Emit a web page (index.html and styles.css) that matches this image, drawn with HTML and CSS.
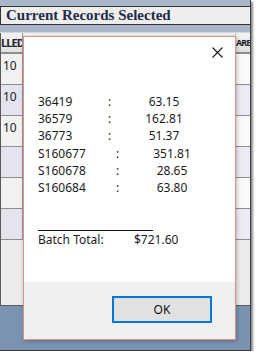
FILE: index.html
```html
<!DOCTYPE html>
<html lang="en">

<head>
    <meta charset="UTF-8">
    <title>Current Records Selected</title>
    <link rel="stylesheet" href="styles.css">
</head>

<body>
    <div class="shot">
        <div class="top-strip"></div>
        <div class="title-bar">Current Records Selected</div>
        <div class="gap-strip"></div>

        <div class="grid">
            <div class="grid-head">
                <div class="cell first">LLED</div>
                <div class="cell mid"></div>
                <div class="cell last">ARE</div>
            </div>
            <div class="grid-row">
                <div class="cell first">10</div>
                <div class="cell mid"></div>
                <div class="cell last"></div>
            </div>
            <div class="grid-row alt">
                <div class="cell first">10</div>
                <div class="cell mid"></div>
                <div class="cell last"></div>
            </div>
            <div class="grid-row">
                <div class="cell first">10</div>
                <div class="cell mid"></div>
                <div class="cell last"></div>
            </div>
            <div class="grid-row alt">
                <div class="cell first"></div>
                <div class="cell mid"></div>
                <div class="cell last"></div>
            </div>
            <div class="grid-row">
                <div class="cell first"></div>
                <div class="cell mid"></div>
                <div class="cell last"></div>
            </div>
            <div class="grid-row alt">
                <div class="cell first"></div>
                <div class="cell mid"></div>
                <div class="cell last"></div>
            </div>
            <div class="grid-empty"></div>
        </div>

        <div class="bottom-area"></div>

        <!-- message box on top of the grid -->
        <div class="dialog">
            <div class="dialog-body">
                <div class="dialog-top">
                    <svg class="close-icon" width="11" height="11" viewBox="0 0 11 11">
                        <path d="M0.5 0.5 L10.5 10.5 M10.5 0.5 L0.5 10.5" stroke="#1b1b1b" stroke-width="1.1" fill="none" />
                    </svg>
                </div>

                <div class="records">
                    <div class="rec"><span class="rec-id">36419</span><span class="rec-sep">:</span><span class="rec-val">63.15</span></div>
                    <div class="rec"><span class="rec-id">36579</span><span class="rec-sep">:</span><span class="rec-val">162.81</span></div>
                    <div class="rec"><span class="rec-id">36773</span><span class="rec-sep">:</span><span class="rec-val">51.37</span></div>
                    <div class="rec wide"><span class="rec-id">S160677</span><span class="rec-sep">:</span><span class="rec-val">351.81</span></div>
                    <div class="rec wide"><span class="rec-id">S160678</span><span class="rec-sep">:</span><span class="rec-val">28.65</span></div>
                    <div class="rec wide"><span class="rec-id">S160684</span><span class="rec-sep">:</span><span class="rec-val">63.80</span></div>
                </div>

                <div class="total-rule"></div>
                <div class="total">
                    <span class="total-label">Batch Total:</span>
                    <span class="total-val">$721.60</span>
                </div>
            </div>

            <div class="dialog-foot">
                <button class="ok-button">OK</button>
            </div>
        </div>
    </div>
</body>

</html>
```

FILE: styles.css
```css
* {
    box-sizing: border-box;
}

body {
    margin: 0;
    background: #ffffff;
    font-family: "Noto Sans", "Open Sans", sans-serif;
}

.shot {
    position: relative;
    width: 251px;
    height: 351px;
    display: flex;
    flex-direction: column;
    background: #7a93b1;
    border-right: 1px solid #3a3a3a;
    border-bottom: 1px solid #3a3a3a;
    box-shadow: 2px 2px 2px rgba(0, 0, 0, 0.45);
    overflow: hidden;
}

.top-strip {
    height: 6px;
    background: #a9b7c8;
}

.title-bar {
    height: 19px;
    padding-left: 5px;
    background: #eeeeee;
    border: 1px solid #333333;
    border-right: none;
    color: #1f2b48;
    font: bold 15px "Liberation Serif", serif;
    line-height: 17px;
    white-space: nowrap;
}

.gap-strip {
    height: 8px;
    background: #a9b7c8;
    border-bottom: 1px solid #d3d8de;
}

.grid {
    background: #ececec;
    border-left: 1px solid #5a5a5a;
}

.grid-head {
    height: 21px;
    display: flex;
    background: linear-gradient(#f3f3f3, #e1e1e1);
    border-bottom: 2px solid #8e8e8e;
    font-size: 11px;
    font-weight: bold;
    color: #1d2330;
    line-height: 19px;
    letter-spacing: -0.9px;
}

.grid-row {
    height: 31px;
    display: flex;
    background: linear-gradient(90deg, #f1f1f1, #fafafa);
    border-bottom: 1px solid #8e8e8e;
    font-size: 12px;
    color: #1b1b1b;
}

.grid-row.alt {
    background: linear-gradient(90deg, #e4e4f0, #ececf6);
}

.cell {
    overflow: hidden;
    white-space: nowrap;
}

.cell.first {
    width: 22px;
    padding: 3px 0 0 2px;
    border-right: 1px solid #9a9a9a;
}

.grid-head .cell.first {
    padding: 0;
    text-align: right;
}

.cell.mid {
    flex: 1;
    border-right: 1px solid #c2c2c2;
}

.cell.last {
    width: 14px;
    padding-left: 1px;
}

.grid-head .cell.last {
    padding-left: 0;
    font-size: 9px;
    letter-spacing: -0.9px;
}

.grid-empty {
    height: 66px;
    border-bottom: 1px solid #5a5a5a;
}

.bottom-area {
    flex: 1;
}

/* message box */
.dialog {
    position: absolute;
    left: 23px;
    top: 36px;
    width: 213px;
    height: 304px;
    display: flex;
    flex-direction: column;
    background: #ffffff;
    border: 1px solid #d4968b;
    box-shadow: 1px 1px 4px rgba(0, 0, 0, 0.25);
    color: #1b1b1b;
    font-size: 12px;
}

.dialog-body {
    flex: 1;
    padding: 10px 12px 0 14px;
}

.dialog-top {
    display: flex;
    justify-content: flex-end;
    height: 11px;
}

.records {
    margin-top: 35px;
}

.rec {
    display: flex;
    line-height: 17.2px;
    white-space: nowrap;
}

.rec-id {
    width: 70px;
}

.rec.wide .rec-id {
    width: 78px;
}

.rec-sep {
    width: 10px;
}

.rec-val {
    width: 92px;
    text-align: center;
}

.total-rule {
    width: 115px;
    margin-top: 34px;
    border-top: 1px solid #111111;
}

.total {
    display: flex;
    line-height: 17px;
}

.total-label {
    width: 96px;
}

.dialog-foot {
    height: 57px;
    display: flex;
    justify-content: flex-end;
    align-items: flex-start;
    padding: 14px 23px 0 0;
    background: #f0f0f0;
}

.ok-button {
    width: 100px;
    height: 27px;
    padding: 0;
    background: #e1e1e1;
    border: 2px solid #0078d7;
    color: #111111;
    font-family: "Noto Sans", "Open Sans", sans-serif;
    font-size: 12px;
}
```
